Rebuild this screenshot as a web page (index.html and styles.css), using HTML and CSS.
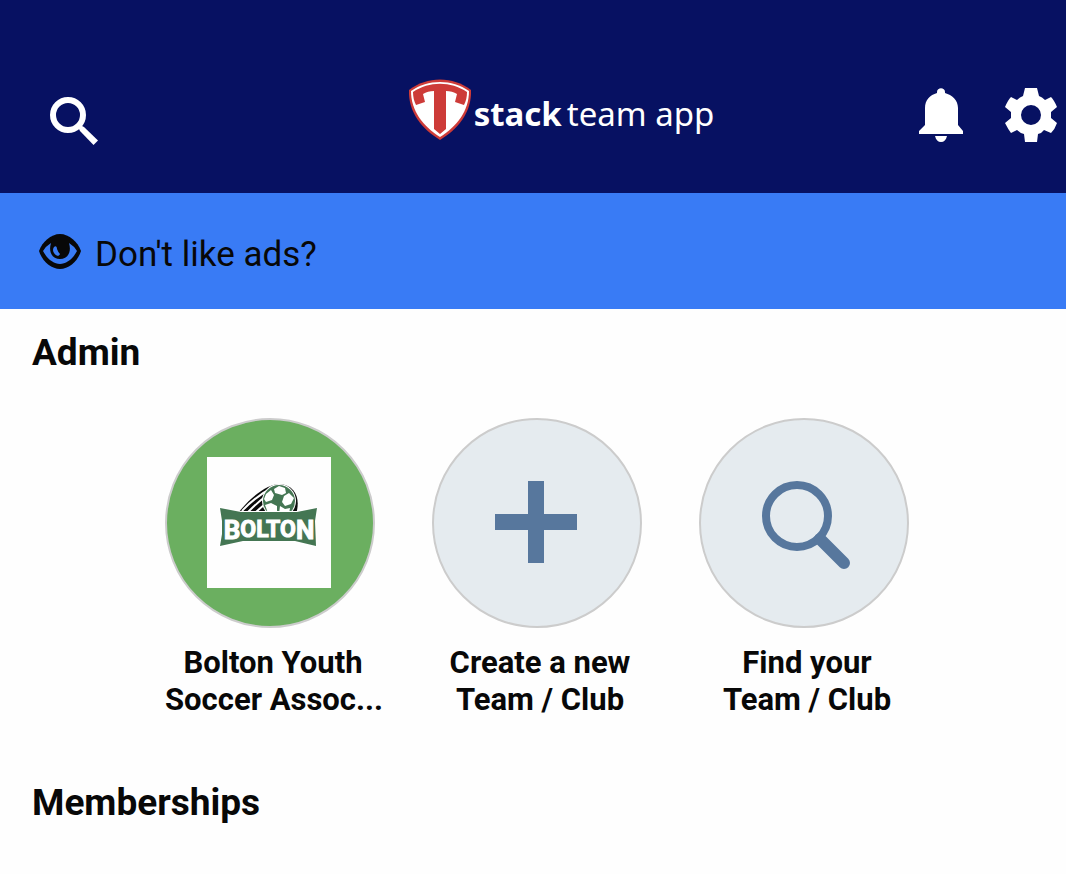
FILE: index.html
```html
<!DOCTYPE html>
<html lang="en">
<head>
<meta charset="utf-8">
<meta name="viewport" content="width=device-width, initial-scale=1">
<title>Stack Team App</title>
<link rel="stylesheet" href="styles.css">
</head>
<body>
<header class="topbar">
  <button class="icon-btn search" aria-label="Search">
    <svg width="48" height="48" viewBox="0 0 48 48"><circle cx="18" cy="18" r="15" fill="none" stroke="#fff" stroke-width="6"/><path d="M27 28 30 34 43.500 48 48 43.500 34 30 28 27Z" fill="#fff"/></svg>
  </button>
  <div class="brand">
    <svg width="62" height="61" viewBox="0 0 62 61"><path d="M0 11C18-3 44-3 62 11C63 33 49 50 31 61C13 50-1 33 0 11Z" fill="#cd3b38"/><path d="M2 12C19 0 43 0 60 12C60 32 48 47 31 58C14 47 2 32 2 12Z" fill="#fff"/><path d="M4 13C20 2 42 2 58 13C58 18 57 22 55 26L46 23 48 15C45 13 41 12 37 12V50L31 55 25 50V12C21 12 17 13 14 15L16 23 7 26C5 22 4 18 4 13Z" fill="#cd3b38"/></svg>
    <span class="wordmark"><b>stack</b><span>team app</span></span>
  </div>
  <div class="actions">
    <button class="icon-btn" aria-label="Notifications">
      <svg width="44" height="54" viewBox="0 0 44 54"><path d="M0 46V43L6 37V20C6 12 11 7 18 5V4C18-1 26-1 26 4V5C33 7 39 12 39 20V37L44 43V46ZM16 48H28C27 52 25 54 22 54S17 52 16 48Z" fill="#fff"/></svg>
    </button>
    <button class="icon-btn" aria-label="Settings">
      <svg width="52" height="54" viewBox="0 0 52 54"><path fill="#fff" fill-rule="evenodd" d="M20 0H32L34 8Q37 9 40 12L46 9Q49 12 52 19L46 24V30L52 35Q50 41 46 45L39 42Q37 45 33 46L32 54H20L19 46Q15 45 12 42L6 45Q3 41 0 35L6 30V24L0 19Q3 12 6 9L12 12Q15 9 18 8ZM26 17A10 10 0 1 0 26 37 10 10 0 1 0 26 17Z"/></svg>
    </button>
  </div>
</header>
<a class="ads" href="#">
  <svg width="42" height="35" viewBox="0 0 42 35"><path d="M0 17C3 8 12 0 21 0S39 8 42 17C39 27 30 35 21 35S3 27 0 17Z" fill="#080808"/><path d="M4 17Q7 12 12 9C9 19 14 25 21 25S33 19 30 9Q35 12 38 17C34 25 27 30 21 30S8 25 4 17Z" fill="#397bf5"/><path d="M15 13C17 11 18 13 18 15Q19 18 21 20C20 23 17 22 15 19Q13 16 15 13Z" fill="#397bf5"/></svg>
  <span>Don't like ads?</span>
</a>
<main>
  <h2>Admin</h2>
  <ul class="teams">
    <li><a href="#">
      <span class="disc club">
        <svg width="124" height="131" viewBox="0 0 124 131"><rect width="124" height="131" fill="#fefefe"/>
          <path d="M31 56C46 37 62 27 73 27C88 28 94 42 89 57Z" fill="#0b0b0b"/>
          <path d="M35 54Q49 39 65 31M40 56Q50 46 59 39M47 57Q52 52 57 48" fill="none" stroke="#fff" stroke-width="2"/>
          <circle cx="72" cy="44" r="17" fill="#fff"/><circle cx="72" cy="44" r="16" fill="#447653"/>
          <path d="M67 32 72 29 78 31 79 36 75 38 68 36ZM77 39 82 36 87 41 84 47 78 49 75 45ZM59 37 64 33 67 38 65 43 59 45 57 42ZM58 48 64 46 70 49 70 56H61ZM73 49 78 52 83 51 82 57H72Z" fill="#fff"/>
          <path d="M13 51 34 55H90L110 51 108 64 109 89 88 84H36L13 89 15 77V64Z" fill="#447653" stroke="#fff" stroke-width="2" paint-order="stroke"/>
          <text class="bolton" x="62" y="80" text-anchor="middle"><tspan class="tall" dy="2">B</tspan><tspan dy="-2">OLTO</tspan><tspan class="tall" dy="2">N</tspan></text>
        </svg>
      </span>
      <span class="label">Bolton Youth<br>Soccer Assoc...</span></a></li>
    <li><a href="#">
      <span class="disc">
        <svg width="82" height="82" viewBox="0 0 82 82"><path d="M33 0H49V33H82V49H49V82H33V49H0V33H33Z" fill="#57779d"/></svg>
      </span>
      <span class="label">Create a new<br>Team / Club</span></a></li>
    <li><a href="#">
      <span class="disc">
        <svg width="94" height="94" viewBox="-6 -6 94 94"><circle cx="35" cy="35" r="31" fill="none" stroke="#57779d" stroke-width="8"/><path d="M58 58 82 82" stroke="#57779d" stroke-width="12" stroke-linecap="round"/></svg>
      </span>
      <span class="label">Find your<br>Team / Club</span></a></li>
  </ul>
  <h2>Memberships</h2>
</main>
</body>
</html>
```
FILE: styles.css
```css
* { box-sizing: border-box; }
body { margin: 0; background: #fefefe; color: #080808; font-family: Roboto, sans-serif; }
svg { display: block; overflow: visible; }
a { color: inherit; text-decoration: none; }
.topbar { display: grid; grid-template-columns: 1fr auto 1fr; align-items: center; padding: 36px 9px 0 50px; min-height: 193px; background: #071162; color: #fff; }
.icon-btn { padding: 0; border: 0; background: none; cursor: pointer; }
.search { justify-self: start; padding-top: 12px; }
.brand { display: flex; align-items: center; gap: 3px; padding: 0 0 10px 16px; }
.wordmark { display: flex; gap: 5px; font-family: "Noto Sans", sans-serif; font-size: 33px; line-height: 48px; white-space: nowrap; padding-top: 8px; }
.actions { display: flex; justify-self: end; gap: 42px; }
.ads { display: flex; align-items: center; gap: 14px; min-height: 116px; padding: 0 39px; background: #397bf5; font-size: 35px; }
.ads span { padding-top: 6px; }
h2 { margin: 0; padding: 0 32px; font-size: 37px; line-height: 44px; font-weight: 700; }
main { padding: 22px 0; }
.teams { display: flex; justify-content: center; gap: 51px; list-style: none; margin: 43px 0 63px; padding: 0 0 0 14px; }
.teams a { display: block; width: 216px; }
.disc { display: flex; align-items: center; justify-content: center; width: 210px; height: 210px; padding: 0 2px 2px 0; border: 2px solid #ccc; border-radius: 50%; background: #e5ebef; }
.club { background: #6baf60; }
.label { display: block; margin-top: 16px; font-size: 31px; line-height: 37px; font-weight: 700; text-align: center; white-space: nowrap; }
.bolton { font-family: Roboto, sans-serif; font-size: 23px; font-weight: 700; fill: #fff; stroke: #fff; stroke-width: 1px; }
.tall { font-size: 26px; }
```
